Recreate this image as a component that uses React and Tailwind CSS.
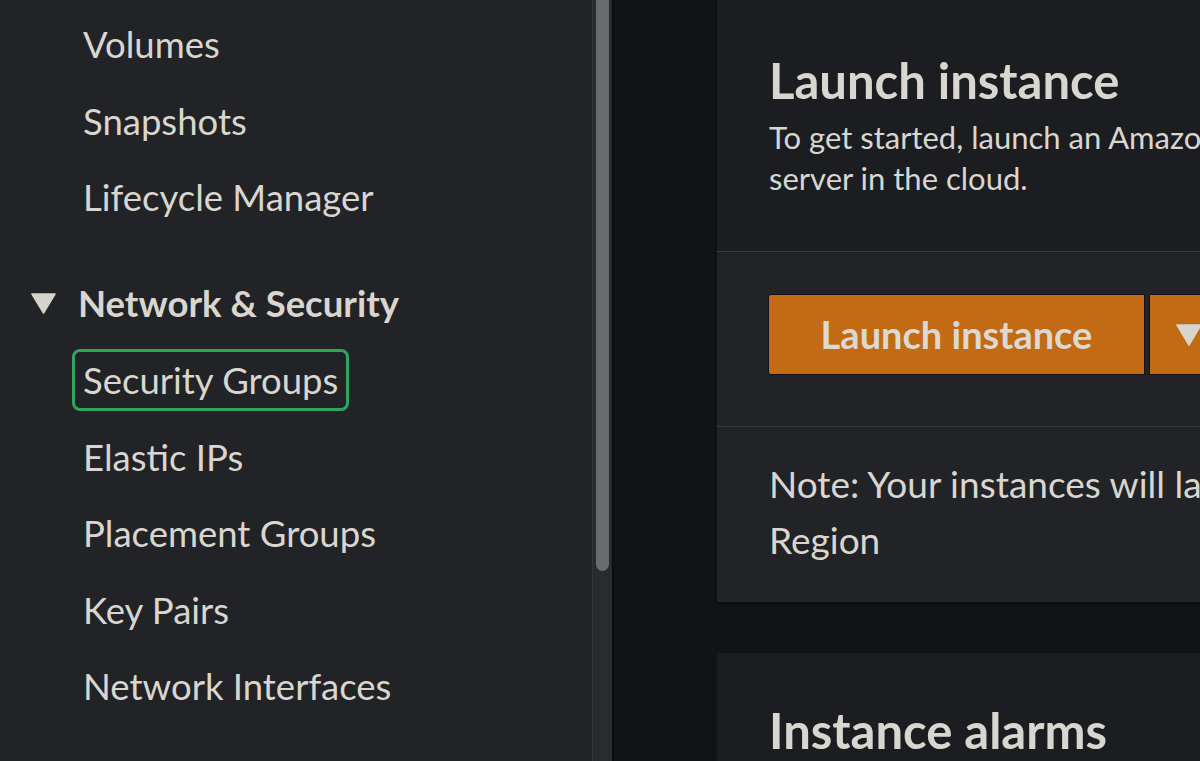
import React from 'react';

const navTop = ['Volumes', 'Snapshots', 'Lifecycle Manager'];
const navNetwork = ['Security Groups', 'Elastic IPs', 'Placement Groups', 'Key Pairs', 'Network Interfaces'];

const font = { fontFamily: '"Lato", "Noto Sans", sans-serif' };

const NavItem = ({ label, active }) => (
  <li className="h-[76.5px] flex items-center pl-[72px]">
    <span
      className={
        active
          ? 'px-[8px] py-[2px] -my-[2px] border-[3px] border-[#2ea55a] rounded-[8px] leading-[52px]'
          : 'pl-[11px] leading-[52px]'
      }
    >
      {label}
    </span>
  </li>
);

export default function App() {
  return (
    <div className="h-screen w-full flex overflow-hidden bg-[#121317] text-[#d9d6d0]" style={font}>
      {/* Sidebar */}
      <aside className="w-[614px] shrink-0 flex bg-[#222326]">
        <nav className="flex-1 pt-[6px] text-[36.5px]">
          <ul>
            {navTop.map((l) => (
              <NavItem key={l} label={l} />
            ))}
          </ul>
          <div className="h-[30px]" />
          <div className="h-[76.5px] flex items-center pl-[31px] gap-[22px]">
            <svg width="25" height="21" viewBox="0 0 25 21">
              <polygon points="1,1 24,1 12.5,20" fill="#d6d3cd" stroke="#d6d3cd" strokeLinejoin="round" strokeWidth="1.5" />
            </svg>
            <span className="font-bold">Network &amp; Security</span>
          </div>
          <ul>
            {navNetwork.map((l) => (
              <NavItem key={l} label={l} active={l === 'Security Groups'} />
            ))}
          </ul>
        </nav>
        {/* scrollbar */}
        <div className="w-[22px] border-l border-[#35373a] bg-[#2a2b2e] border-r-2 border-r-[#0c0d10] flex justify-center">
          <div className="w-[13px] h-[571px] rounded-b-[7px] bg-[#6a6b6e]" />
        </div>
      </aside>

      {/* Main */}
      <main className="flex-1 min-w-0 pl-[103px] flex flex-col">
        <section className="bg-[#222326] shadow-[0_2px_3px_rgba(0,0,0,0.5)] overflow-hidden">
          <div className="bg-[#1b1d21] h-[252px] pl-[52px] pt-[52px] border-b border-[#3a3e44]">
            <h1 className="font-bold text-[49px] leading-[56px] whitespace-nowrap">Launch instance</h1>
            <p className="text-[31px] leading-[41px] mt-[9px] whitespace-nowrap">
              To get started, launch an Amazon EC2 instance, which is a virtual
              <br />
              server in the cloud.
            </p>
          </div>
          <div className="h-[175px] pl-[51px] pt-[42px] border-b border-[#35383d] flex gap-[4px]">
            <button className="w-[377px] shrink-0 h-[81px] bg-[#c36b14] rounded-l-[3px] border border-[#0f1114] font-bold text-[38px] text-[#dcd9d3]">
              Launch instance
            </button>
            <button className="w-[80px] shrink-0 h-[81px] bg-[#c36b14] border border-[#0f1114] flex items-center pl-[26px]">
              <svg width="26" height="22" viewBox="0 0 26 22">
                <polygon points="1,1 25,1 13,21" fill="#d8d5cf" stroke="#d8d5cf" strokeLinejoin="round" strokeWidth="1.5" />
              </svg>
            </button>
          </div>
          <div className="h-[175px] pl-[52px] pt-[29px] text-[37px] leading-[56px] whitespace-nowrap">
            Note: Your instances will launch in the US East (N. Virginia)
            <br />
            Region
          </div>
        </section>
        <section className="mt-[51px] bg-[#1b1d21] flex-1 pl-[52px] pt-[49px] overflow-hidden">
          <h2 className="font-bold text-[49px] leading-[56px] whitespace-nowrap">Instance alarms</h2>
        </section>
      </main>
    </div>
  );
}
